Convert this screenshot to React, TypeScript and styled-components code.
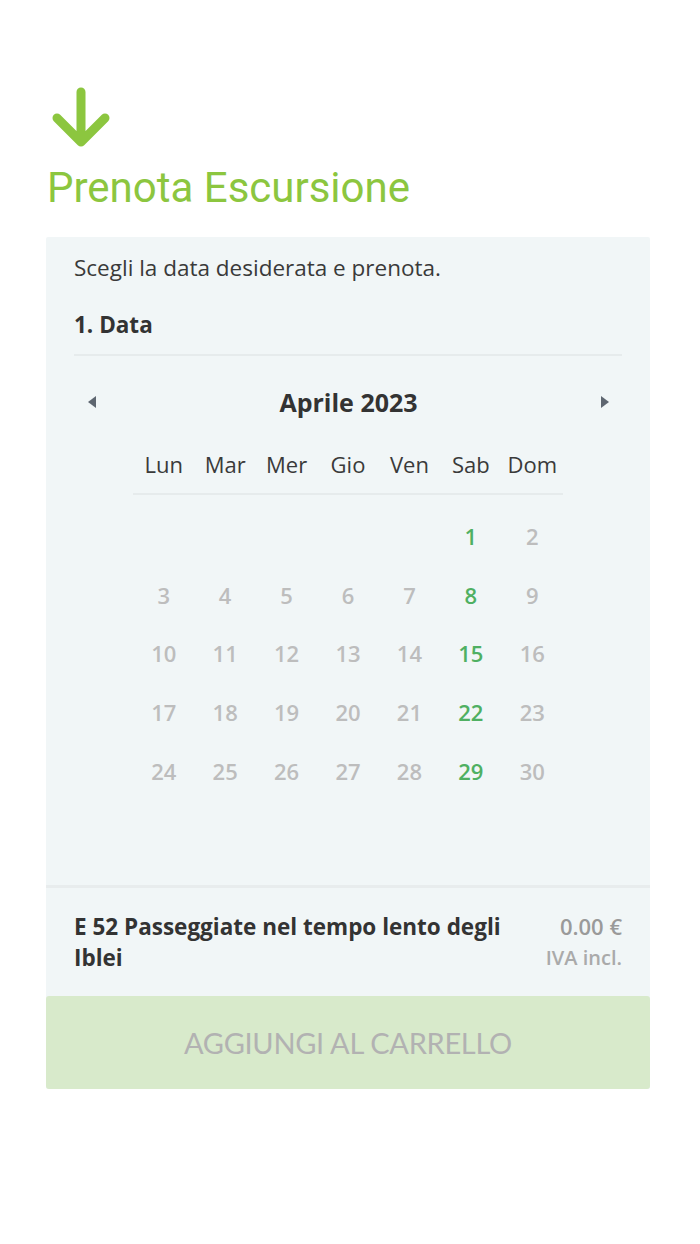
import { createGlobalStyle, styled } from 'styled-components';

const GlobalStyle = createGlobalStyle`
  html, body {
    margin: 0;
    padding: 0;
    background: #ffffff;
  }
  body {
    font-family: 'Open Sans', 'Noto Sans', sans-serif;
  }
`;

const available = [1, 8, 15, 22, 29];
const weekdays = ['Lun', 'Mar', 'Mer', 'Gio', 'Ven', 'Sab', 'Dom'];

export default function App() {
  const cells: (number | null)[] = [null, null, null, null, null];
  for (let d = 1; d <= 30; d++) cells.push(d);

  return (
    <Page>
      <GlobalStyle />
      <ArrowIcon viewBox="0 0 62 62">
        <path
          d="M31 6 V54 M7 32 L31 56 L55 32"
          fill="none"
          stroke="#8cc63f"
          strokeWidth="9"
          strokeLinecap="round"
          strokeLinejoin="round"
        />
      </ArrowIcon>
      <Title>Prenota Escursione</Title>
      <Panel>
        <Body>
          <Intro>Scegli la data desiderata e prenota.</Intro>
          <Step>1. Data</Step>
          <Calendar>
            <MonthBar>
              <NavButton aria-label="prev">
                <svg width="10" height="14" viewBox="0 0 10 14">
                  <path d="M9 1 L1 7 L9 13 Z" fill="#5e6670" />
                </svg>
              </NavButton>
              <Month>Aprile 2023</Month>
              <NavButton aria-label="next">
                <svg width="10" height="14" viewBox="0 0 10 14">
                  <path d="M1 1 L9 7 L1 13 Z" fill="#5e6670" />
                </svg>
              </NavButton>
            </MonthBar>
            <WeekHeader>
              {weekdays.map((w) => (
                <WeekDay key={w}>{w}</WeekDay>
              ))}
            </WeekHeader>
            <Days>
              {cells.map((d, i) => (
                <Day key={i} $active={d !== null && available.includes(d)}>
                  {d ?? ''}
                </Day>
              ))}
            </Days>
          </Calendar>
        </Body>
        <Summary>
          <ProductName>E 52 Passeggiate nel tempo lento degli Iblei</ProductName>
          <Price>
            <Amount>0.00 €</Amount>
            <Vat>IVA incl.</Vat>
          </Price>
        </Summary>
        <AddButton disabled>AGGIUNGI AL CARRELLO</AddButton>
      </Panel>
    </Page>
  );
}

const Page = styled.div`
  padding: 86px 50px 0 46px;
  width: 604px;
`;

const ArrowIcon = styled.svg`
  display: block;
  width: 62px;
  height: 62px;
  margin-left: 4px;
`;

const Title = styled.h2`
  margin: 15px 0 24px 1px;
  font-family: Roboto, sans-serif;
  font-weight: 400;
  font-size: 42px;
  line-height: 50px;
  color: #8cc63f;
`;

const Panel = styled.div`
  background: #f1f6f7;
  border-radius: 2px;
`;

const Body = styled.div`
  box-sizing: border-box;
  padding: 13px 28px 0 28px;
  height: 651px;
  border-bottom: 3px solid #e8eced;
`;

const Intro = styled.p`
  margin: 0;
  font-size: 22.5px;
  line-height: 36px;
  color: #3a3a3a;
`;

const Step = styled.div`
  margin-top: 21px;
  padding-bottom: 11px;
  font-size: 22.5px;
  line-height: 36px;
  font-weight: 700;
  color: #333;
  border-bottom: 2px solid #e6ebec;
`;

const Calendar = styled.div`
  padding-top: 28px;
`;

const MonthBar = styled.div`
  display: flex;
  align-items: center;
  justify-content: space-between;
  height: 36px;
  padding: 0 10px 0 11px;
`;

const NavButton = styled.button`
  border: 0;
  background: none;
  padding: 0;
  width: 14px;
  height: 20px;
  display: flex;
  align-items: center;
  justify-content: center;
  cursor: pointer;
`;

const Month = styled.div`
  font-size: 25px;
  font-weight: 700;
  color: #333;
`;

const WeekHeader = styled.div`
  display: grid;
  grid-template-columns: repeat(7, 1fr);
  width: 430px;
  height: 58px;
  margin: 15px auto 0;
  border-bottom: 2px solid #e6ebec;
`;

const WeekDay = styled.div`
  display: flex;
  align-items: center;
  justify-content: center;
  font-size: 22px;
  color: #3a3a3a;
`;

const Days = styled.div`
  display: grid;
  grid-template-columns: repeat(7, 1fr);
  grid-auto-rows: 58.7px;
  width: 430px;
  margin: 11.5px auto 0;
`;

const Day = styled.div<{ $active: boolean }>`
  display: flex;
  align-items: center;
  justify-content: center;
  font-size: 22px;
  font-weight: 600;
  color: ${(p) => (p.$active ? '#4fb062' : '#bdbdbd')};
`;

const Summary = styled.div`
  display: flex;
  justify-content: space-between;
  align-items: flex-start;
  gap: 24px;
  padding: 22.5px 28px 23.5px 28px;
`;

const ProductName = styled.div`
  font-size: 22.5px;
  font-weight: 700;
  line-height: 31px;
  color: #333;
`;

const Price = styled.div`
  text-align: right;
  flex-shrink: 0;
`;

const Amount = styled.div`
  font-size: 22px;
  font-weight: 600;
  line-height: 31px;
  color: #9a9a9a;
`;

const Vat = styled.div`
  font-size: 20px;
  font-weight: 600;
  line-height: 31px;
  color: #aaa;
`;

const AddButton = styled.button`
  display: block;
  width: 100%;
  height: 93px;
  border: 0;
  border-radius: 3px;
  background: #d8eacb;
  color: #b2b2b2;
  font-family: Lato, sans-serif;
  font-size: 29px;
  font-weight: 400;
  letter-spacing: -0.3px;
  cursor: not-allowed;
`;
